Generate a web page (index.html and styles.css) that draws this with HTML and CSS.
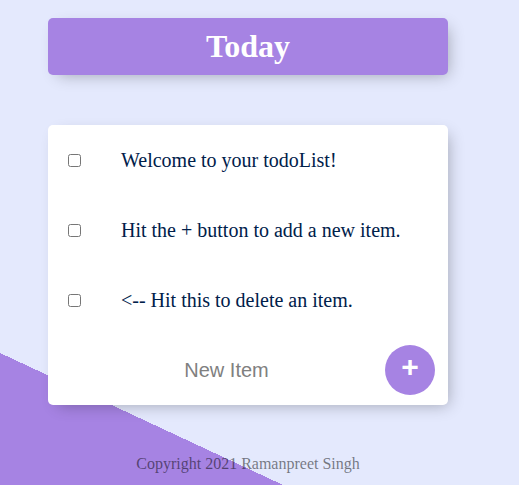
FILE: index.html
```html
<!DOCTYPE html>
<html lang="en">
<head>
<meta charset="utf-8">
<title>todoList</title>
<link rel="stylesheet" href="styles.css">
</head>
<body>
<div class="page">
  <div class="box heading">
    <h1 class="title">Today</h1>
  </div>
  <div class="box list">
    <div class="item">
      <input class="check" type="checkbox">
      <p class="text">Welcome to your todoList!</p>
    </div>
    <div class="item">
      <input class="check" type="checkbox">
      <p class="text">Hit the + button to add a new item.</p>
    </div>
    <div class="item">
      <input class="check" type="checkbox">
      <p class="text">&lt;-- Hit this to delete an item.</p>
    </div>
    <form class="item new-form">
      <input class="new-input" type="text" name="newItem" placeholder="New Item" autocomplete="off">
      <button class="add-btn" type="submit">+</button>
    </form>
  </div>
  <footer class="footer">Copyright 2021 Ramanpreet Singh</footer>
</div>
</body>
</html>
```

FILE: styles.css
```css
html {
  height: 100%;
  background-color: #E4E9FD;
  background-image: linear-gradient(25deg, #A683E3 18.16%, #E4E9FD 18.16%);
}

body {
  margin: 0;
  font-family: "Liberation Serif", "Times New Roman", serif;
}

.page {
  width: 400px;
  margin-left: 48px;
  padding-top: 18px;
}

.box {
  background: #ffffff;
  border-radius: 5px;
  box-shadow: 5px 5px 15px -5px rgba(0, 0, 0, 0.3);
}

.heading {
  background-color: #A683E3;
  text-align: center;
}

.title {
  margin: 0;
  padding: 10px;
  color: #ffffff;
  font-size: 32px;
  line-height: 37px;
  font-weight: bold;
}

.list {
  margin-top: 50px;
}

.item {
  box-sizing: border-box;
  height: 70px;
  display: flex;
  align-items: center;
}

.check {
  margin: 20px;
  width: 13px;
  height: 13px;
  flex: none;
}

.text {
  margin: 0;
  padding: 20px;
  font-size: 20px;
  font-weight: normal;
  color: #00204a;
}

.new-form {
  margin: 0;
  padding-left: 20px;
}

.new-input {
  box-sizing: border-box;
  width: 317px;
  height: 60px;
  padding: 1px 2px;
  border: none;
  background: transparent;
  text-align: center;
  font-family: "Liberation Sans", Arial, sans-serif;
  font-size: 20px;
  color: #333333;
}

.new-input::placeholder {
  color: grey;
  opacity: 1;
}

.new-input:focus {
  outline: none;
}

.add-btn {
  box-sizing: border-box;
  width: 50px;
  height: 50px;
  padding: 0 0 6px 0;
  border: 0;
  border-radius: 50%;
  background-color: #A683E3;
  color: #ffffff;
  font-family: "Liberation Sans", Arial, sans-serif;
  font-size: 30px;
  font-weight: bold;
  line-height: 1;
}

.footer {
  margin-top: 50px;
  text-align: center;
  font-size: 16px;
  color: rgba(0, 0, 0, 0.5);
}
```
